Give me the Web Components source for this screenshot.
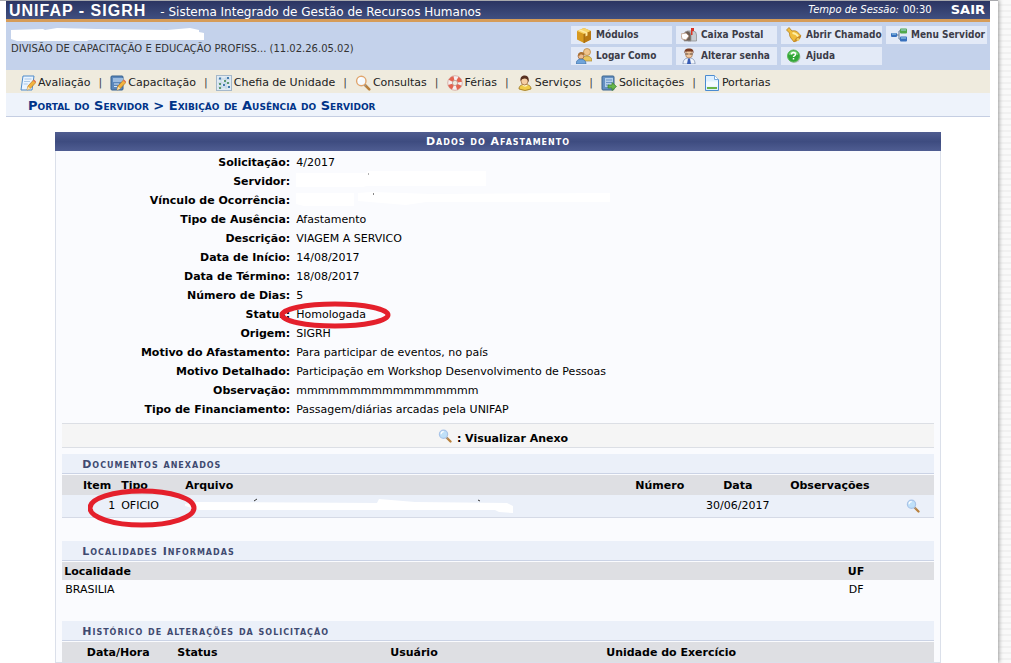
<!DOCTYPE html>
<html lang="pt-BR">
<head>
<meta charset="utf-8">
<title>SIGRH - Exibição de Ausência do Servidor</title>
<style>
  html { background: #f7f7f7 repeating-linear-gradient(#f9f9f9 0 4px, #f1f1f1 4px 6px); }
  body { margin: 0; font: 11px/14px Verdana, "DejaVu Sans", sans-serif; color: #000; }
</style>
</head>
<body>
<portal-page>
  <portal-header></portal-header>
  <portal-menu>
    <menu-entry icon="note">Avaliação</menu-entry>
    <menu-entry icon="book">Capacitação</menu-entry>
    <menu-entry icon="chart">Chefia de Unidade</menu-entry>
    <menu-entry icon="lens">Consultas</menu-entry>
    <menu-entry icon="buoy">Férias</menu-entry>
    <menu-entry icon="user">Serviços</menu-entry>
    <menu-entry icon="export">Solicitações</menu-entry>
    <menu-entry icon="page">Portarias</menu-entry>
  </portal-menu>
  <bread-crumb>Portal do Servidor &gt; Exibição de Ausência do Servidor</bread-crumb>
  <absence-panel>
    <detail-row label="Solicitação:">4/2017</detail-row>
    <detail-row label="Servidor:"><blank-mark kind="name"></blank-mark></detail-row>
    <detail-row label="Vínculo de Ocorrência:"><blank-mark kind="link"></blank-mark></detail-row>
    <detail-row label="Tipo de Ausência:">Afastamento</detail-row>
    <detail-row label="Descrição:">VIAGEM A SERVICO</detail-row>
    <detail-row label="Data de Início:">14/08/2017</detail-row>
    <detail-row label="Data de Término:">18/08/2017</detail-row>
    <detail-row label="Número de Dias:">5</detail-row>
    <detail-row label="Status:" ringed>Homologada</detail-row>
    <detail-row label="Origem:">SIGRH</detail-row>
    <detail-row label="Motivo do Afastamento:">Para participar de eventos, no país</detail-row>
    <detail-row label="Motivo Detalhado:">Participação em Workshop Desenvolvimento de Pessoas</detail-row>
    <detail-row label="Observação:">mmmmmmmmmmmmmmmmm</detail-row>
    <detail-row label="Tipo de Financiamento:">Passagem/diárias arcadas pela UNIFAP</detail-row>
    <icon-legend slot="more">: Visualizar Anexo</icon-legend>
    <attachment-table slot="more"></attachment-table>
    <place-table slot="more"></place-table>
    <history-table slot="more"></history-table>
  </absence-panel>
</portal-page>
<script>
const define = (name, html, setup) => customElements.define(name, class extends HTMLElement {
  constructor() {
    super();
    this.attachShadow({ mode: 'open' }).innerHTML = html;
  }
  connectedCallback() { if (setup) setup(this, this.shadowRoot); }
});

const lens = (rim) => `<path d="M10 10l4.300 4.300" stroke="#b9803c" stroke-width="2.600" stroke-linecap="round"/><path d="M9.500 9.500l1.500 1.500" stroke="#999" stroke-width="1.500"/><circle cx="6.300" cy="6" r="4.700" fill="${rim ? '#f4faff' : '#bfe0f8'}" stroke="${rim || '#a9c4e8'}" stroke-width="1.400"/><path d="M3.500 6a3 3 0 0 1 3-3" stroke="#fff" stroke-width="1.300" fill="none"/>`;
const pencil = '<path d="M7 15l1-4 5.500-6 2.500 2.300-5.500 6z" fill="#f3b33d" stroke="#b87820" stroke-width=".7"/><path d="M7 15l1-3.500 2.300 2.200z" fill="#f9e3b5"/><path d="M13 5.500l1-1 2 2-1 1z" fill="#e2705c"/>';
const ICONS = {
  note: '<path d="M3 1h11l-2 14H1z" fill="#eaf4ff" stroke="#4e8bcb"/><path d="M4.500 4h7M4 6.500h6M3.700 9h4" stroke="#aac8e8"/>' + pencil,
  book: '<rect x="1" y="1" width="12" height="14" rx="1" fill="#5b87bb" stroke="#34608f"/><rect x="3" y="3" width="10" height="4" fill="#9cbce0"/><path d="M4 9h5M4 11.500h3" stroke="#d5e5f5"/>' + pencil,
  chart: '<rect x=".5" y=".5" width="15" height="15" fill="#dfeaf3" stroke="#a5b8ca"/><path d="M2 4h12M2 8h12M2 12h12M5 2v12M10 2v12" stroke="#bed2e2"/><g fill="#437cae"><rect x="3" y="2.500" width="2" height="2"/><rect x="11" y="2" width="2" height="2"/><rect x="7" y="9" width="2" height="2"/><rect x="12" y="11" width="2" height="2"/></g><g fill="#5e9a70"><rect x="8" y="5" width="2" height="2"/><rect x="3" y="8" width="2" height="2"/><rect x="3" y="12" width="2" height="2"/><rect x="11" y="7" width="2" height="2"/></g>',
  lens: lens('#e1a56d'),
  find: lens(''),
  buoy: '<circle cx="8" cy="8" r="5" fill="none" stroke="#f6eeee" stroke-width="4.500"/><circle cx="8" cy="8" r="5" fill="none" stroke="#e36450" stroke-width="4.500" stroke-dasharray="4.100 3.754" stroke-dashoffset="-2"/><circle cx="8" cy="8" r="7.300" fill="none" stroke="#c98c84" stroke-width=".6"/><circle cx="8" cy="8" r="2.600" fill="none" stroke="#a8807c" stroke-width=".6"/>',
  user: '<path d="M2 14c0-3 2-4.500 6-4.500s6 1.500 6 4.500q-6 3-12 0z" fill="#f0cc48" stroke="#9b7420" stroke-width=".8"/><path d="M5 10q3 3.500 6 0" fill="#fff3c0"/><ellipse cx="7.500" cy="6" rx="3.500" ry="4" fill="#f6cfa4" stroke="#845027" stroke-width=".6"/><path d="M3.500 6C3 2 5 .5 8 .5s4.500 3 3.500 7q-.5-4-4-4-3 0-4 2.500z" fill="#572f20"/>',
  export: '<rect x="1" y="1" width="12" height="14" rx="1" fill="#6590c2" stroke="#3a648e"/><rect x="4" y="3" width="8" height="9" fill="#b4cfea"/><path d="M5 5h6M5 7.500h6M5 10h3" stroke="#6a93c6"/><path d="M7 10h4V7.500l4.500 4-4.500 4V13H7z" fill="#68b64b" stroke="#36802a" stroke-width=".7"/>',
  page: '<path d="M1.500.5h9l4 4v11h-13z" fill="#dff0ff" stroke="#4b8bd0"/><path d="M10.500.5v4h4" fill="#fff" stroke="#76a9dd"/><path d="M2 6.500h12v5H2z" fill="#f4faff"/><path d="M3 12h10v2H3z" fill="#69b347"/>',
  box: '<path d="M1 4l7-3 7 3v8.500L8 16l-7-3.500z" fill="#d89a20"/><path d="M1 4l7-3 7 3-7 3z" fill="#f8d56b"/><path d="M8 7l7-3v8.500L8 16z" fill="#b97913"/><path d="M4.500 2.500l7 3v3l-2 1V6.300l-7-3z" fill="#ffeaa2"/><path d="M8 7v9" stroke="#8c5b0e" stroke-width=".6"/>',
  mail: '<path d="M7 4h5q3.500 0 3.500 4v6H7z" fill="#c7ccd2" stroke="#888" stroke-width=".7"/><path d="M3 14V8q.5-4 3.500-4T10 8v6z" fill="#6e5f56" stroke="#999" stroke-width=".8"/><path d="M0 7l5-1 3 3-3 4-4-1z" fill="#fff" stroke="#b08a70" stroke-width=".7"/><path d="M10 8V1h3v3h-1.500v4z" fill="#d93427"/>',
  bell: '<path d="M.5 3l2.500-2.500L6 4c4-1 6 1 9 5l-7 6C6 12 3 10 3.500 6z" fill="#f0bd3c" stroke="#b07d20" stroke-width=".8"/><path d="M6.500 6q4 .5 6 4" stroke="#fff0a5" stroke-width="1.800" fill="none"/><path d="M15 8.500c1 2-4 7-7 6.500 0-2.500 4-6.500 7-6.500z" fill="#c98b28"/><circle cx="12" cy="12.500" r="1.400" fill="#f0cf60"/>',
  tree: '<path d="M5 8h3M8 4v8M8 4h3M8 12h3" stroke="#8493a6" stroke-width="1.300" fill="none"/><rect x="0" y="6" width="6" height="4" rx="1" fill="#3770bd"/><rect x="9" y="1.500" width="7" height="5" rx="1" fill="#51a84b"/><rect x="9" y="9.500" width="7" height="5" rx="1" fill="#3770bd"/><path d="M1 7h4M10 3h5M10 11h5" stroke="#a6d5ea"/>',
  users: '<circle cx="11" cy="4" r="3.500" fill="#f0c58d" stroke="#b68338" stroke-width=".7"/><path d="M6 13c0-4 2-5 5-5s5 2 5 5z" fill="#e9c55d" stroke="#a98a36" stroke-width=".7"/><circle cx="5" cy="8" r="3" fill="#eebd91" stroke="#95603a" stroke-width=".7"/><path d="M2 8q0-4 3.500-4T8 7q-3 0-3-1-1 2-3 2z" fill="#aa7134"/><path d="M0 16c0-3 2-5 5-5s5 2 5 5z" fill="#6fa4da" stroke="#3f70a6" stroke-width=".7"/>',
  clerk: '<path d="M2 16c0-4 2-6 6-6s6 2 6 6z" fill="#f1f5fb" stroke="#7b8eb0" stroke-width=".8"/><path d="M7 10.500h2l1 5.500H6z" fill="#375cb5"/><ellipse cx="8" cy="6" rx="3.500" ry="4" fill="#f2c9a1" stroke="#94643f" stroke-width=".6"/><path d="M3.500 5.500C3 1.500 5 .5 8 .5s5 1 4.500 5l-1-2h-7z" fill="#7b3c22"/><path d="M4.500 6h3M8.500 6h3" stroke="#55433a"/>',
  help: '<circle cx="8.500" cy="9" r="6" fill="#b9c3bf"/><circle cx="7.500" cy="8" r="6" fill="#32a637" stroke="#5cb85a"/><path d="M3 7q0-4 4.500-4T12 7q-4.500-2-9 0z" fill="#82d77d"/><path d="M5.500 6.500q0-2 2-2t2 1.700q0 1-1.100 1.600-.9.500-.9 1.200M7.500 10v1.600" stroke="#fff" stroke-width="1.500" fill="none"/>'
};
define('ui-icon', `<style>:host{display:inline-block;flex:none;width:16px;height:16px}:host([small]){width:14px;height:14px}svg{display:block;width:100%;height:100%}</style><svg viewBox="0 0 16 16" fill="none" aria-hidden="true"></svg>`,
  (el, root) => { root.querySelector('svg').innerHTML = ICONS[el.getAttribute('name')]; });

/* White strokes painted over private values */
const MARKS = {
  user: [194, 16, '<path d="M0 4L32 3l2 1 12-2 40 1 70 1 23-2 9 2v2l5 1v7H78l-2 1H6l-6-2z" fill="#fff"/>'],
  name: [192, 18, '<path d="M0 3h70l2-2h118v15H70l-2 1H0z" fill="#fff"/><path d="M72 4h1" stroke="#666"/>'],
  link: [316, 18, '<path d="M0 4h58v13H8L0 15zM62 4l14-1 60 2 178-1v9H130l-20 3-48-4z" fill="#fff"/><path d="M77 5h1" stroke="#111"/>'],
  file: [328, 16, '<path d="M0 6l12-2 180 1 2-4 36 3 92 1 6 3v7l-14-1-4-2H14L0 8z" fill="#fff"/><path d="M69 3l3-2M293 2l2 1" stroke="#333"/>']
};
define('blank-mark', `<style>:host{display:block}svg{display:block}</style><svg aria-hidden="true"></svg>`, (el, root) => {
  const [w, h, art] = MARKS[el.getAttribute('kind')], svg = root.querySelector('svg');
  svg.setAttribute('width', w); svg.setAttribute('height', h); svg.innerHTML = art;
});

define('portal-page', `<style>
  :host{display:block;box-sizing:border-box;min-height:100vh;margin-right:13px;padding:0 8px 0 6px;background:#fff;border-top:1px solid #a8a9ad;box-shadow:1px 0 4px #999}
</style><slot></slot>`);

define('portal-header', `<style>
  :host{display:block}
  .bar{display:flex;align-items:center;height:18px;padding:0 5px 0 3px;background:linear-gradient(#2b3462,#404f80);border-bottom:3px solid #d69c58;color:#fff}
  h1{margin:0;padding-top:2px;font:bold 16px/18px "Liberation Sans",Arial,sans-serif;letter-spacing:1px}
  .name{flex:1;margin-left:14px;padding-top:3px;font-size:12px}
  em,.time{font-size:10px}
  .time{margin-left:4px}
  .bar a{margin-left:19px;color:#fff;font-weight:bold;font-size:13px;text-decoration:none}
  .info{display:flex;justify-content:space-between;min-height:44px;padding:4px 3px 0 5px;background:#c4d2eb}
  .unit{font-size:10px;color:#333}
  nav{display:grid;grid-template-columns:repeat(4,101px);grid-auto-rows:18px;gap:3px 4px;align-content:start}
</style>
<div class="bar"><h1>UNIFAP - SIGRH</h1><span class="name">- Sistema Integrado de Gestão de Recursos Humanos</span><em>Tempo de Sessão:</em><span class="time">00:30</span><a href="#">SAIR</a></div>
<div class="info"><div class="unit"><blank-mark kind="user"></blank-mark>DIVISÃO DE CAPACITAÇÃO E EDUCAÇÃO PROFISS... (11.02.26.05.02)</div>
<nav><quick-link icon="box">Módulos</quick-link><quick-link icon="mail">Caixa Postal</quick-link><quick-link icon="bell">Abrir Chamado</quick-link><quick-link icon="tree">Menu Servidor</quick-link><quick-link icon="users">Logar Como</quick-link><quick-link icon="clerk">Alterar senha</quick-link><quick-link icon="help">Ajuda</quick-link></nav></div>`);

class IconLink extends HTMLElement {
  constructor() {
    super();
    this.attachShadow({ mode: 'open' }).innerHTML = `<style>${this.constructor.css}</style><a href="#"><ui-icon name="${this.getAttribute('icon')}"></ui-icon><slot></slot></a>`;
  }
}
customElements.define('quick-link', class extends IconLink {
  static css = `:host{display:block;background:#e3eaf7;overflow:hidden}a{display:flex;align-items:center;gap:4px;height:18px;padding-left:5px;font:bold 10px/18px "DejaVu Sans Condensed","DejaVu Sans",sans-serif;color:#3c3c48;text-decoration:none;white-space:nowrap}`;
});
customElements.define('menu-entry', class extends IconLink {
  static css = `:host{display:flex;align-items:center}:host(:not(:last-child))::after{content:"|";margin:0 8px;color:#444}a{display:flex;align-items:center;gap:2px;color:#222;text-decoration:none;white-space:nowrap}`;
});
define('portal-menu', `<style>:host{display:block;background:#efebde}nav{display:flex;align-items:center;box-sizing:border-box;height:23px;padding:2px 0 0 14px}</style><nav><slot></slot></nav>`);
define('bread-crumb', `<style>:host{display:block;background:#eef3fb;border-bottom:1px solid #c5cee2}h2{margin:0;padding:0 22px;font-size:13px;line-height:26px;height:23px;font-variant:small-caps;color:#003388}</style><h2><slot></slot></h2>`);

define('absence-panel', `<style>
  :host{display:block;box-sizing:border-box;width:90%;margin:15px auto 0;border:1px solid #dbe0ea;border-top:0;background:#fafbfe}
  h3{margin:0 -1px;height:19px;font-size:11px;line-height:20px;letter-spacing:1px;font-variant:small-caps;text-align:center;color:#fff;background:linear-gradient(#505d90,#3e4c80 50%,#4f5d92)}
  .more{padding:6px 6px 0}
</style><h3>Dados do Afastamento</h3><div><slot></slot></div><div class="more"><slot name="more"></slot></div>`);
define('detail-row', `<style>
  :host{display:grid;grid-template-columns:234px 1fr;column-gap:6px;height:19px;line-height:23px}
  b{text-align:right}
  div{position:relative}
  svg{display:none;position:absolute;left:-18px;top:-2px}
  :host([ringed]) svg{display:block}
</style><b></b><div><slot></slot><svg width="114" height="28" fill="none" aria-hidden="true"><ellipse cx="57" cy="14" rx="53" ry="11" stroke="#e4202c" stroke-width="5"/></svg></div>`,
  (el, root) => { root.querySelector('b').textContent = el.getAttribute('label'); });
define('icon-legend', `<style>:host{display:flex;justify-content:center;align-items:flex-start;gap:5px;height:18px;margin-bottom:6px;padding:5px 0 0 10px;background:#f5f5f5;border:solid #dcdfe5;border-width:1px 0;font-weight:bold}span{padding-top:3px}</style><ui-icon name="find" small></ui-icon><span><slot></slot></span>`);

const TABLE = `
  :host{display:block}
  h4{margin:0;height:19px;padding-left:20px;background:#ebf0f9;border-bottom:1px solid #cbd3e5;margin-bottom:1px;font-size:11px;line-height:21px;letter-spacing:1px;font-variant:small-caps;color:#404a70}
  table{width:100%;table-layout:fixed;border-collapse:collapse}
  th{background:#dedfe3;height:20px;padding:2px 3px 0;text-align:left;box-sizing:border-box}
  td{padding:0 3px}
  .c{text-align:center}.r{text-align:right}`;
define('attachment-table', `<style>${TABLE}
  :host{margin-bottom:23px}
  .item{width:56px}.type{width:64px}.num{width:68px}.date{width:88px}.obs{width:96px}.view{width:56px}
  th.item{padding-right:7px}
  tbody{background:#ebf0f9;border-bottom:1px solid #d5dae6}
  td{height:22px}
  td.view{padding-right:14px}
  td.view ui-icon{display:block;margin-left:auto}
  .ring{position:relative}
  svg{position:absolute;left:26px;top:-7px}
</style><h4>Documentos anexados</h4>
<table><thead><tr><th class="item r">Item</th><th class="type">Tipo</th><th>Arquivo</th><th class="num c">Número</th><th class="date c">Data</th><th class="obs c">Observações</th><th class="view"></th></tr></thead>
<tbody><tr><td class="item r ring">1<svg width="110" height="40" fill="none" aria-hidden="true"><ellipse cx="54" cy="20" rx="52" ry="17" stroke="#e4202c" stroke-width="5"/></svg></td><td>OFICIO</td><td><blank-mark kind="file"></blank-mark></td><td></td><td class="c">30/06/2017</td><td></td><td class="view"><ui-icon name="find" small></ui-icon></td></tr></tbody></table>`);
define('place-table', `<style>${TABLE}
  :host{margin-bottom:22px}
  th{height:18px;padding:2px 2px 0}
  td{height:19px}
  .uf{width:88px}
</style><h4>Localidades Informadas</h4>
<table><thead><tr><th>Localidade</th><th class="uf">UF</th></tr></thead><tbody><tr><td>BRASILIA</td><td>DF</td></tr></tbody></table>`);
define('history-table', `<style>${TABLE}
  .when{width:112px}.status{width:213px}.who{width:216px}
</style><h4>Histórico de alterações da solicitação</h4>
<table><thead><tr><th class="when c">Data/Hora</th><th class="status">Status</th><th class="who">Usuário</th><th>Unidade do Exercício</th></tr></thead></table>`);
</script>
</body>
</html>
